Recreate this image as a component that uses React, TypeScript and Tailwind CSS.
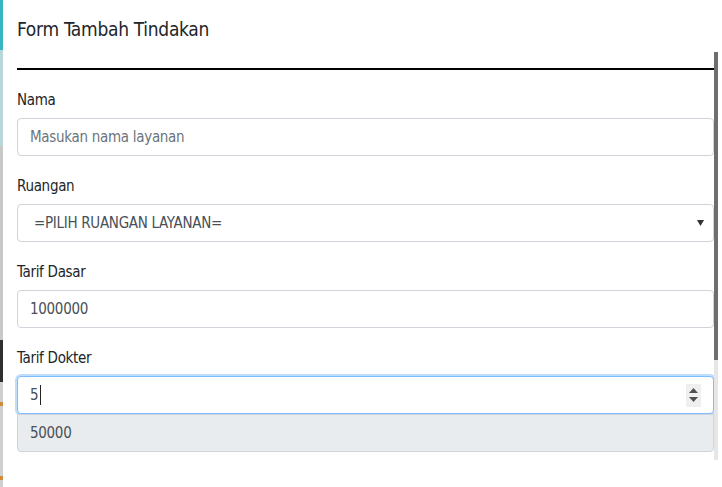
const font = "font-['DejaVu_Sans_Condensed','Liberation_Sans_Narrow','Liberation_Sans',sans-serif]";

function Label({ text }: { text: string }) {
  return <div className="h-[24px] leading-[24px] text-[15px] tracking-[-0.3px] text-[#212529]">{text}</div>;
}

function TextInput({ value, placeholder }: { value?: string; placeholder?: string }) {
  return (
    <div className="mt-[6px] h-[38px] rounded-[4px] border border-[#ced4da] bg-white pl-[12px] flex items-center text-[15px] tracking-[-0.3px]">
      {value ? (
        <span className="text-[#495057]">{value}</span>
      ) : (
        <span className="text-[#6c757d]">{placeholder}</span>
      )}
    </div>
  );
}

export default function App() {
  return (
    <div className={`w-[722px] h-[487px] flex overflow-hidden bg-white ${font}`}>
      {/* page behind the modal */}
      <div className="w-[3px] flex flex-col shrink-0">
        <div className="h-[50px] bg-[#37b5c4]" />
        <div className="h-[96px] bg-[#b9d6d8]" />
        <div className="h-[194px] bg-[#c8c8c8]" />
        <div className="h-[42px] bg-[#2f2f2f]" />
        <div className="h-[20px] bg-[#cfcfcf]" />
        <div className="h-[4px] bg-[#d08a3a]" />
        <div className="h-[70px] bg-[#d0d0d0]" />
        <div className="h-[4px] bg-[#d08a3a]" />
        <div className="flex-1 bg-[#d0d0d0]" />
      </div>

      <div className="w-[711px] shrink-0 pl-[14px]">
        <div className="pt-[14px] pb-[24px] border-b-2 border-black">
          <h4 className="h-[30px] leading-[30px] text-[19px] tracking-[-0.3px] text-[#212529]">Form Tambah Tindakan</h4>
        </div>

        <div className="mt-[18px]">
          <Label text="Nama" />
          <TextInput placeholder="Masukan nama layanan" />
        </div>

        <div className="mt-[18px]">
          <Label text="Ruangan" />
          <div className="mt-[6px] h-[38px] rounded-[4px] border border-[#ced4da] bg-white pl-[16px] pr-[8px] flex items-center justify-between text-[15px] tracking-[-0.3px] text-[#495057]">
            <span>=PILIH RUANGAN LAYANAN=</span>
            <svg width="7" height="6" viewBox="0 0 7 6" className="mr-[1px]">
              <path d="M0 0h7L3.5 6z" fill="#333" />
            </svg>
          </div>
        </div>

        <div className="mt-[18px]">
          <Label text="Tarif Dasar" />
          <TextInput value="1000000" />
        </div>

        <div className="mt-[18px]">
          <Label text="Tarif Dokter" />
          <div className="mt-[6px] h-[38px] rounded-[4px] border border-[#80bdff] bg-white pl-[12px] pr-[12px] flex items-center justify-between text-[15px] text-[#495057] shadow-[0_0_0_2px_rgba(0,123,255,0.25)]">
            <span className="flex items-center">
              5<span className="ml-[1px] w-px h-[20px] bg-[#222]" />
            </span>
            <div className="w-[15px] h-[23px] bg-[#efefef] flex flex-col items-center justify-center gap-[4px]">
              <svg width="9" height="5" viewBox="0 0 9 5">
                <path d="M4.5 0L9 5H0z" fill="#505050" />
              </svg>
              <svg width="9" height="5" viewBox="0 0 9 5">
                <path d="M0 0h9L4.5 5z" fill="#505050" />
              </svg>
            </div>
          </div>
          <div className="h-[38px] rounded-b-[4px] border border-[#ced4da] bg-[#e9ecef] pl-[12px] flex items-center text-[15px] tracking-[-0.3px] text-[#495057]">
            50000
          </div>
        </div>
      </div>

      {/* scrollbar */}
      <div className="w-[4px] shrink-0 flex flex-col">
        <div className="h-[52px]" />
        <div className="h-[308px] bg-[#6e6e6e]" />
        <div className="h-[100px] bg-[#e6e6e6]" />
      </div>
      <div className="flex-1" />
    </div>
  );
}
